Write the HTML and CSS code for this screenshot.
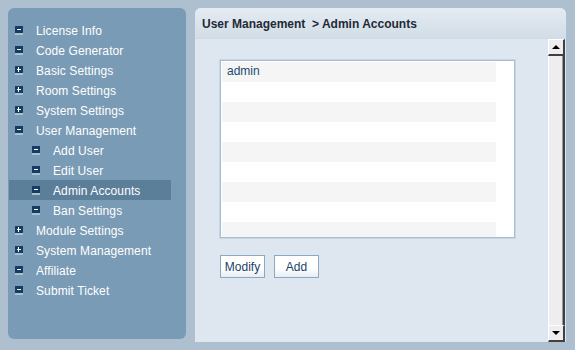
FILE: index.html
```html
<!DOCTYPE html>
<html lang="en">
<head>
    <meta charset="UTF-8">
    <title>Admin Accounts</title>
    <link rel="stylesheet" href="styles.css">
</head>
<body>
    <div class="frame">
        <div class="sidebar">
            <ul class="menu">
                <li class="item"><span class="icon minus"></span>License Info</li>
                <li class="item"><span class="icon minus"></span>Code Generator</li>
                <li class="item"><span class="icon plus"></span>Basic Settings</li>
                <li class="item"><span class="icon plus"></span>Room Settings</li>
                <li class="item"><span class="icon plus"></span>System Settings</li>
                <li class="item"><span class="icon minus"></span>User Management</li>
                <li class="item sub"><span class="icon minus"></span>Add User</li>
                <li class="item sub"><span class="icon minus"></span>Edit User</li>
                <li class="item sub active"><span class="icon minus"></span>Admin Accounts</li>
                <li class="item sub"><span class="icon minus"></span>Ban Settings</li>
                <li class="item"><span class="icon plus"></span>Module Settings</li>
                <li class="item"><span class="icon plus"></span>System Management</li>
                <li class="item"><span class="icon minus"></span>Affiliate</li>
                <li class="item"><span class="icon minus"></span>Submit Ticket</li>
            </ul>
        </div>

        <div class="main">
            <div class="main-header">User Management &nbsp;&gt; Admin Accounts</div>
            <div class="main-body">
                <div class="content">
                    <div class="listbox">
                        <div class="row">admin</div>
                        <div class="row"></div>
                        <div class="row"></div>
                        <div class="row"></div>
                        <div class="row"></div>
                        <div class="row"></div>
                        <div class="row"></div>
                        <div class="row"></div>
                        <div class="row"></div>
                    </div>
                    <div class="actions">
                        <button class="btn">Modify</button>
                        <button class="btn">Add</button>
                    </div>
                </div>

                <!-- scrollbar -->
                <div class="scrollbar">
                    <div class="sb-btn"><span class="arrow up"></span></div>
                    <div class="sb-track"></div>
                    <div class="sb-btn"><span class="arrow down"></span></div>
                </div>
            </div>
        </div>
    </div>
</body>
</html>
```

FILE: styles.css
```css
body {
    margin: 0;
    background-color: #aebfcf;
    font-family: "Liberation Sans", Arial, sans-serif;
    font-size: 12px;
}
.frame {
    display: flex;
    gap: 9px;
    padding: 8px 9px 8px 8px;
    height: 350px;
    box-sizing: border-box;
}
.sidebar {
    width: 178px;
    height: 331px;
    background-color: #7a9bb5;
    border-radius: 6px;
    padding-top: 12px;
    box-sizing: border-box;
}
.menu {
    list-style: none;
    margin: 0 0 0 1px;
    padding: 0;
    width: 162px;
}
.item {
    display: flex;
    align-items: center;
    height: 20px;
    padding-left: 6px;
    padding-top: 1px;
    box-sizing: border-box;
    color: #ffffff;
    letter-spacing: 0.1px;
}
.item.sub {
    padding-left: 23px;
}
.item.active {
    background-color: #5b7e99;
}
.icon {
    position: relative;
    width: 8px;
    height: 7px;
    margin-right: 13px;
    margin-top: -1px;
    background-color: #163c63;
    border-bottom: 2px solid #a9bfd2;
}
.icon::before {
    content: "";
    position: absolute;
    left: 2px;
    top: 3px;
    width: 4px;
    height: 1px;
    background-color: #ffffff;
}
.icon.plus::after {
    content: "";
    position: absolute;
    left: 3px;
    top: 1px;
    width: 1px;
    height: 5px;
    background-color: #ffffff;
}
.main {
    flex: 1;
    display: flex;
    flex-direction: column;
    height: 334px;
    border-radius: 6px 6px 0 0;
    overflow: hidden;
    background-color: #dee6ef;
}
.main-header {
    height: 30px;
    line-height: 32px;
    padding-left: 7px;
    font-weight: bold;
    color: #1f2a36;
    background: linear-gradient(#e4ebf2, #d2dde7);
    border-bottom: 1px solid #cfdbe6;
}
.main-body {
    flex: 1;
    display: flex;
}
.content {
    flex: 1;
    padding: 21px 0 0 25px;
}
.listbox {
    width: 274px;
    height: 174px;
    background-color: #ffffff;
    border: 1px solid #a7bdd0;
    padding: 1px 18px 1px 1px;
    overflow: hidden;
    box-shadow: 0 0 0 1px #c8d6e3;
}
.row {
    height: 20px;
    line-height: 18px;
    padding-left: 5px;
    color: #1a4a72;
}
.row:nth-child(odd) {
    background-color: #f5f5f5;
}
.actions {
    display: flex;
    gap: 9px;
    margin-top: 17px;
}
.btn {
    width: 45px;
    height: 23px;
    padding: 0;
    font-family: "Liberation Sans", Arial, sans-serif;
    font-size: 12px;
    color: #1a3f66;
    background: linear-gradient(#ffffff 60%, #e6edf3);
    border: 1px solid #8ea8bf;
}
.scrollbar {
    width: 17px;
    margin-right: 1px;
    display: flex;
    flex-direction: column;
}
.sb-btn {
    height: 17px;
    box-sizing: border-box;
    background-color: #eeeeee;
    border-top: 1px solid #ffffff;
    border-left: 1px solid #ffffff;
    border-right: 2px solid #404040;
    border-bottom: 2px solid #404040;
    display: flex;
    align-items: center;
    justify-content: center;
}
.sb-track {
    flex: 1;
    background-color: #eeeeee;
    border-left: 1px solid #ffffff;
    border-right: 2px solid #404040;
    box-shadow: inset -1px 0 0 #9a9a9a;
}
.arrow {
    width: 0;
    height: 0;
    border-left: 4px solid transparent;
    border-right: 4px solid transparent;
}
.arrow.up {
    border-bottom: 4px solid #000000;
}
.arrow.down {
    border-top: 4px solid #000000;
}
```
